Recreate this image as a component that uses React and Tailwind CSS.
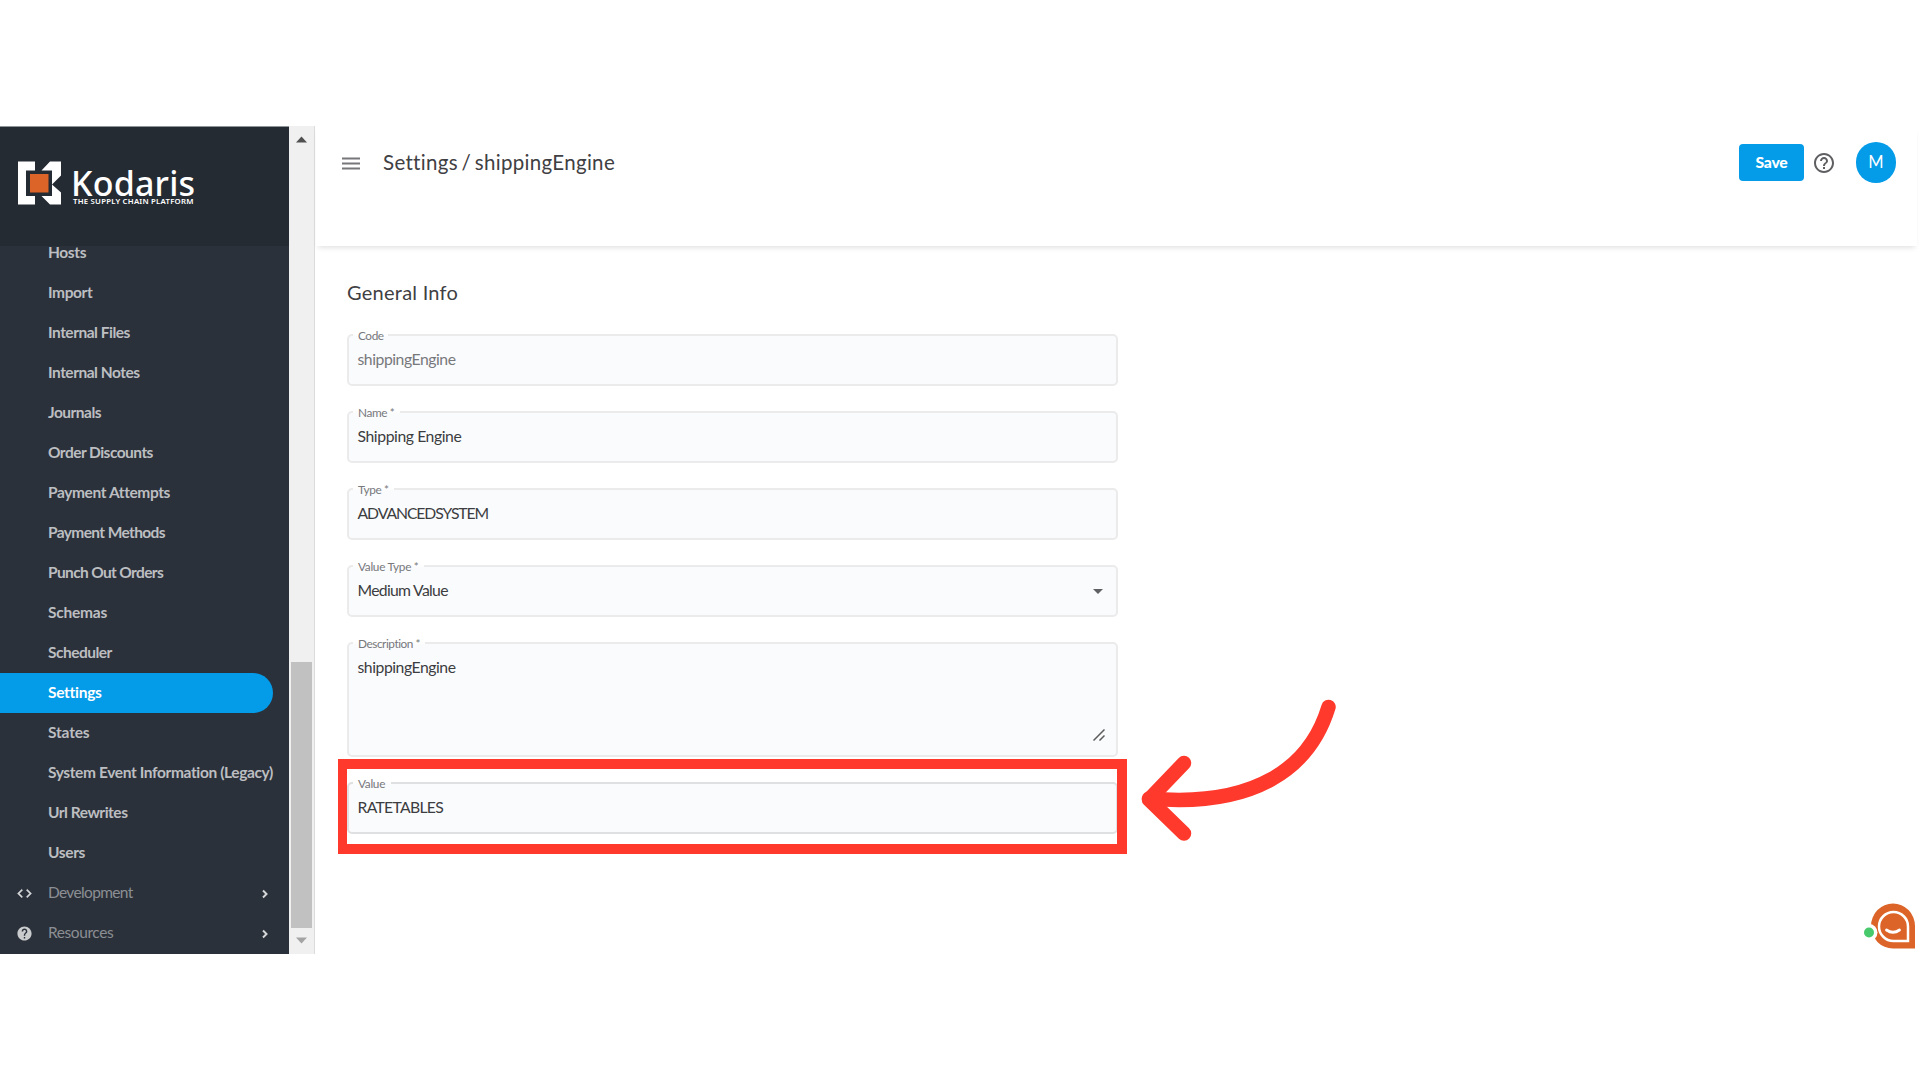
import React, { useState } from "react";

const topItems = [
  { label: "Hosts", tracking: "tracking-[-0.370px]" },
  { label: "Import", tracking: "tracking-[-0.400px]" },
  { label: "Internal Files", tracking: "tracking-[-0.490px]" },
  { label: "Internal Notes", tracking: "tracking-[-0.490px]" },
  { label: "Journals", tracking: "tracking-[-0.490px]" },
  { label: "Order Discounts", tracking: "tracking-[-0.530px]" },
  { label: "Payment Attempts", tracking: "tracking-[-0.400px]" },
  { label: "Payment Methods", tracking: "tracking-[-0.620px]" },
  { label: "Punch Out Orders", tracking: "tracking-[-0.640px]" },
  { label: "Schemas", tracking: "tracking-[-0.230px]" },
  { label: "Scheduler", tracking: "tracking-[-0.520px]" },
  { label: "Settings", tracking: "tracking-[-0.280px]" },
  { label: "States", tracking: "tracking-[-0.180px]" },
  { label: "System Event Information (Legacy)", tracking: "tracking-[-0.380px]" },
  { label: "Url Rewrites", tracking: "tracking-[-0.480px]" },
  { label: "Users", tracking: "tracking-[-0.370px]" },
];

const CodeIcon = () => (
  <svg viewBox="0 0 24 24" className="w-[17px] h-[17px]" fill="#d5d6d8" stroke="#d5d6d8" strokeWidth="0.600">
    <path d="M9.4 16.6L4.8 12l4.6-4.6L8 6l-6 6 6 6 1.4-1.4zm5.2 0l4.6-4.6-4.6-4.6L16 6l6 6-6 6-1.4-1.4z" />
  </svg>
);

const HelpIcon = () => (
  <svg viewBox="0 0 24 24" className="w-[17px] h-[17px]" fill="#c9cbcd">
    <path d="M12 2C6.48 2 2 6.48 2 12s4.480 10 10 10 10-4.480 10-10S17.520 2 12 2zm1 17h-2v-2h2v2zm2.070-7.750l-.9.920C13.450 12.900 13 13.500 13 15h-2v-.5c0-1.100.450-2.100 1.170-2.830l1.240-1.260c.370-.360.590-.860.590-1.410 0-1.100-.9-2-2-2s-2 .9-2 2H8c0-2.210 1.790-4 4-4s4 1.790 4 4c0 .880-.360 1.680-.930 2.250z" />
  </svg>
);

const Logo = () => (
  <div className="flex pl-[18px] pt-[34px]">
    <svg viewBox="0 0 43 44" className="w-[43px] h-[44px]">
      <path
        fill="#fff"
        d="M0 0.500H17V9.500H8V35H17V43.500H0ZM32 0.500H43V14.500L34 23.500L43 31.500V43.500H32L23.500 35H34V9.500H23.500Z"
      />
      <rect x="12" y="13" width="18.500" height="18.500" fill="#dc6428" />
    </svg>
    <div className="ml-[10px] text-white font-['Noto_Sans']">
      <div className="mt-[8px] text-[34px] leading-[28px] font-medium tracking-[0.200px]">
        Kodaris
      </div>
      <div className="ml-[2px] text-[7.800px] leading-[8px] font-semibold tracking-[0.220px] whitespace-nowrap">
        THE SUPPLY CHAIN PLATFORM
      </div>
    </div>
  </div>
);

const Sidebar = ({ active, onSelect }) => (
  <aside className="w-[289px] shrink-0 bg-[#2b313a] flex flex-col overflow-hidden">
    <div className="h-[120px] shrink-0 bg-[#252b33] border-t border-[#8f9496]">
      <Logo />
    </div>
    <nav className="-mt-[13px] text-[15.5px] text-[#bcbec1]">
      {topItems.map((item) => (
        <div
          key={item.label}
          onClick={() => onSelect(item.label)}
          className={`h-[40px] w-[273px] pl-[48px] flex items-center whitespace-nowrap font-bold rounded-r-full ${
            item.label === active ? "bg-[#049be8] text-white" : ""
          } ${item.tracking}`}
        >
          {item.label}
        </div>
      ))}
      {["Development", "Resources"].map((label) => (
        <div key={label} className="h-[40px] flex items-center text-[#8b8f94]">
          <div className="w-[48px] pt-[1px] flex justify-center">
            {label === "Development" ? <CodeIcon /> : <HelpIcon />}
          </div>
          <div
            className={`flex-1 ${
              label === "Development" ? "tracking-[-0.660px]" : "tracking-[-0.420px]"
            }`}
          >
            {label}
          </div>
          <svg viewBox="0 0 8 10" className="w-[8px] h-[10px] mr-[20px] mt-[1px]" fill="none">
            <path d="M2 1.500L5.500 5L2 8.500" stroke="#d5d6d8" strokeWidth="2" />
          </svg>
        </div>
      ))}
    </nav>
  </aside>
);

const Scrollbar = () => (
  <div className="w-[26px] shrink-0 bg-[#f0f0f0] border-r border-[#dcdcdc] flex flex-col items-start">
    <svg viewBox="0 0 25 25" className="w-[25px] h-[25px]">
      <path d="M7 16.500L12.500 10.500L18 16.500Z" fill="#505050" />
    </svg>
    <div className="mt-[511px] ml-[2px] w-[21px] h-[266px] bg-[#c1c1c1]" />
    <svg viewBox="0 0 25 25" className="w-[25px] h-[25px]">
      <path d="M7 9.500L12.500 15.500L18 9.500Z" fill="#a3a3a3" />
    </svg>
  </div>
);

const Field = ({ label, value, notch, height, labelTracking, tracking, color, border, children }) => (
  <div
    className={`relative w-[771px] shrink-0 rounded-[5px] border-2 bg-[#fafbfd] ${
      border || "border-[#ebebec]"
    } ${height || "h-[52px]"}`}
  >
    <div className={`absolute -top-[2px] left-[4px] h-[2px] bg-[#fdfdfe] ${notch}`} />
    <div
      className={`absolute -top-[7px] left-[9px] text-[11.8px] leading-[14px] text-[#77787b] whitespace-nowrap ${labelTracking}`}
    >
      {label}
    </div>
    <div
      className={`pl-[8.500px] pt-[13px] text-[15.75px] leading-[20px] whitespace-nowrap ${
        color || "text-[#3c3d40]"
      } ${tracking}`}
    >
      {value}
    </div>
    {children}
  </div>
);

const Header = () => (
  <header className="h-[120px] shrink-0 mr-[3px] ml-[1px] pl-[26px] pr-[21px] flex items-start shadow-[0_4px_5px_-2px_rgba(0,0,0,0.11)]">
    <svg viewBox="0 0 18 14" className="w-[18px] h-[14px] mt-[30px]">
      <path d="M0 2.500H18M0 7.500H18M0 12.500H18" stroke="#77777a" strokeWidth="2.200" />
    </svg>
    <h1 className="ml-[23px] mt-[22px] text-[20.5px] leading-[28px] text-[#3f4043] tracking-[0.320px] [word-spacing:-2px]">
      Settings / shippingEngine
    </h1>
    <button className="ml-auto mt-[18px] w-[65px] h-[37px] rounded-[4px] bg-[#049be8] text-white text-[15.75px] font-black pb-[2px] tracking-[-0.300px]">
      Save
    </button>
    <svg viewBox="0 0 24 24" className="w-[24px] h-[24px] ml-[8px] mt-[25px]" fill="#5f5f62">
      <path d="M11 18h2v-2h-2v2zm1-16C6.480 2 2 6.480 2 12s4.480 10 10 10 10-4.480 10-10S17.520 2 12 2zm0 18c-4.410 0-8-3.590-8-8s3.590-8 8-8 8 3.590 8 8-3.590 8-8 8zm0-14c-2.210 0-4 1.790-4 4h2c0-1.100.9-2 2-2s2 .9 2 2c0 2-3 1.750-3 5h2c0-2.250 3-2.500 3-5 0-2.210-1.790-4-4-4z" />
    </svg>
    <div className="ml-[20px] mt-[16px] w-[40px] h-[41px] rounded-full bg-[#049be8] text-white text-[16.5px] flex items-center justify-center">
      M
    </div>
  </header>
);

const ChatWidget = () => (
  <svg viewBox="0 0 52 46" className="absolute left-[1863px] top-[903px] w-[52px] h-[46px]">
    <path d="M52 45.500H30A22 22.500 0 1 1 52 23Z" fill="#dc6428" />
    <circle cx="6" cy="29.500" r="8.500" fill="#fff" />
    <circle cx="6" cy="29.500" r="5" fill="#48ca6c" />
    <path d="M45 38H30.500A14.500 14.500 0 1 1 45 23.500Z" fill="none" stroke="#fff" strokeWidth="2.500" />
    <path d="M23.500 27Q30 31.500 36.500 27" fill="none" stroke="#fff" strokeWidth="2.800" strokeLinecap="round" />
  </svg>
);

const App = () => {
  const [active, setActive] = useState("Settings");

  return (
    <div className="relative w-[1920px] h-[1080px] overflow-hidden bg-white pt-[126px] font-[Lato,sans-serif]">
      <div className="flex h-[828px]">
        <Sidebar active={active} onSelect={setActive} />
        <Scrollbar />
        <main className="flex-1 flex flex-col">
          <Header />
          <section className="pl-[32px] pt-[32px] flex flex-col">
            <h2 className="text-[20px] leading-[28px] text-[#3f4043] tracking-[0.250px]">General Info</h2>
            <div className="mt-[28px] flex flex-col gap-[25px]">
              <Field
                label="Code"
                value="shippingEngine"
                notch="w-[35px]"
                color="text-[#77787b]"
                labelTracking="tracking-[-0.400px]"
                tracking="tracking-[-0.450px]"
              />
              <Field
                label="Name *"
                value="Shipping Engine"
                notch="w-[47px]"
                labelTracking="tracking-[-0.400px]"
                tracking="tracking-[-0.420px]"
              />
              <Field
                label="Type *"
                value="ADVANCEDSYSTEM"
                notch="w-[41px]"
                labelTracking="tracking-[-0.400px]"
                tracking="tracking-[-1.080px]"
              />
              <Field
                label="Value Type *"
                value="Medium Value"
                notch="w-[71px]"
                labelTracking="tracking-[-0.300px]"
                tracking="tracking-[-0.700px]"
              >
                <svg viewBox="0 0 10 5" className="absolute right-[13px] top-[22px] w-[10px] h-[5px]">
                  <path d="M0 0H10L5 5Z" fill="#5f6063" />
                </svg>
              </Field>
              <Field
                label="Description *"
                value="shippingEngine"
                notch="w-[72px]"
                height="h-[115px]"
                labelTracking="tracking-[-0.440px]"
                tracking="tracking-[-0.450px]"
              >
                <svg viewBox="0 0 12 12" className="absolute right-[11px] bottom-[14px] w-[12px] h-[12px]">
                  <path d="M0.500 11.500L11.500 0.500M6.500 11.500L11.500 6.500" stroke="#5c5c5c" strokeWidth="1.500" />
                </svg>
              </Field>
              <Field
                label="Value"
                value="RATETABLES"
                notch="w-[38px]"
                border="border-[#dfe0e2]"
                labelTracking="tracking-[-0.300px]"
                tracking="tracking-[-0.700px]"
              />
            </div>
          </section>
        </main>
      </div>

      {/* highlight box and arrow */}
      <div className="absolute left-[338px] top-[759px] w-[789px] h-[95px] border-[10px] border-l-[9px] border-[#ff392c]" />
      <svg
        viewBox="1130 690 220 160"
        className="absolute left-[1130px] top-[690px] w-[220px] h-[160px]"
        fill="none"
        stroke="#ff392c"
        strokeWidth="14.500"
        strokeLinecap="round"
        strokeLinejoin="round"
      >
        <path d="M1328.500 707C1310 768 1255 808 1149 798.500" />
        <path d="M1184 763L1149 799.500L1184 833.500" />
      </svg>
      <ChatWidget />
    </div>
  );
};

export default App;
